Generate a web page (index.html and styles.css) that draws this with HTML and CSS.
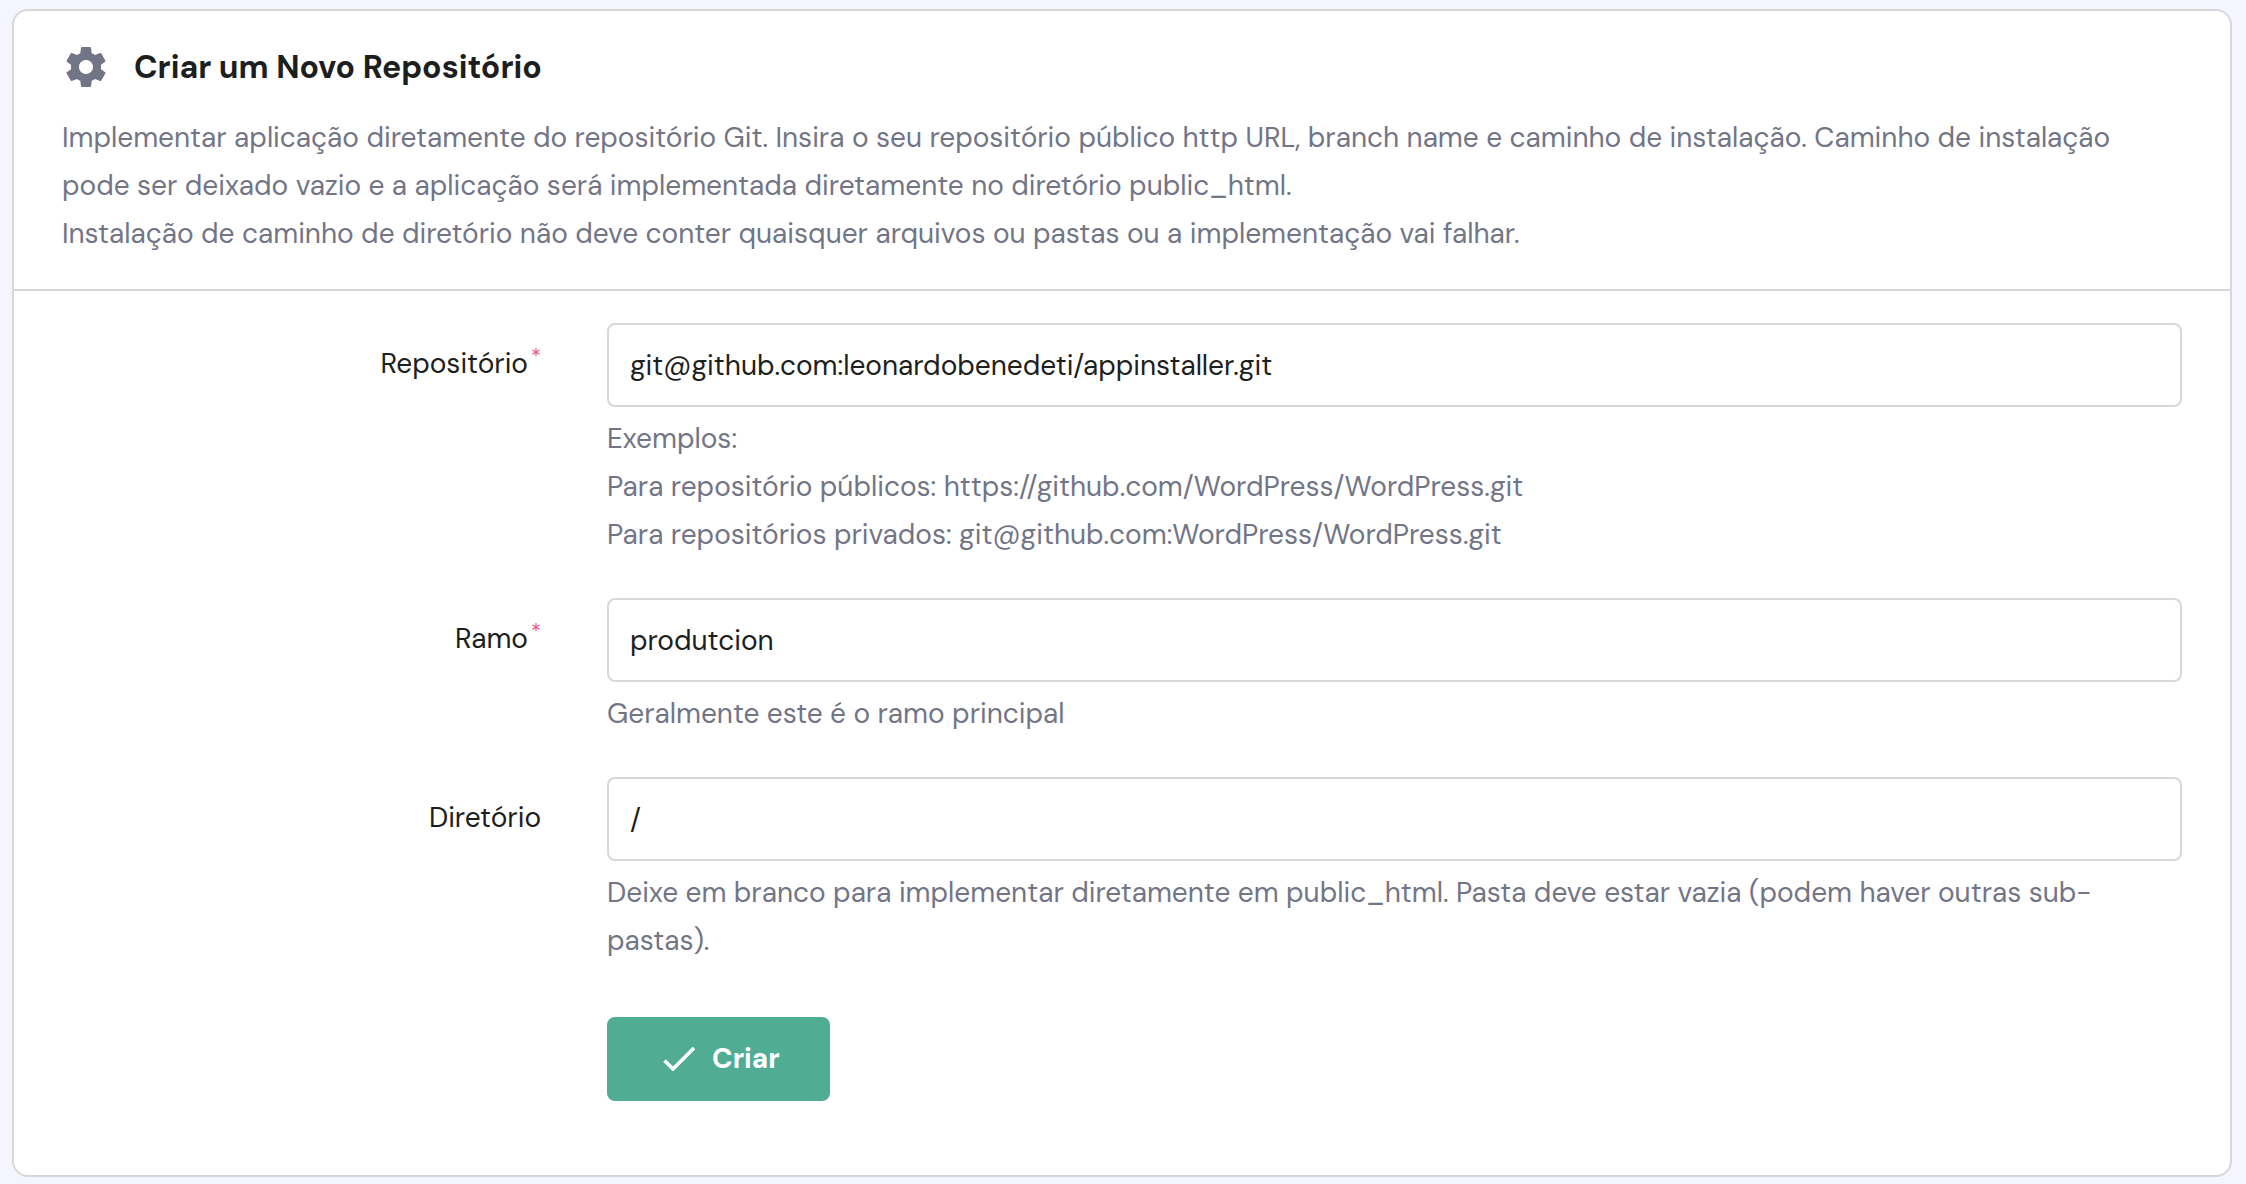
FILE: index.html
```
<!DOCTYPE html>
<html lang="pt">
<head>
  <meta charset="utf-8">
  <meta name="viewport" content="width=device-width, initial-scale=1">
  <title>Criar um Novo Repositório</title>
  <link rel="stylesheet" href="styles.css">
</head>
<body>
  <main class="card">
    <header class="card-header">
      <div class="card-heading">
        <svg class="card-icon" viewBox="0 0 24 24" aria-hidden="true">
          <path fill="currentColor" d="M19.43 12.98c.04-.32.07-.64.07-.98s-.03-.66-.07-.98l2.11-1.65c.19-.15.24-.42.12-.64l-2-3.46c-.12-.22-.39-.3-.61-.22l-2.49 1c-.52-.4-1.08-.73-1.69-.98l-.38-2.65C14.46 2.18 14.25 2 14 2h-4c-.25 0-.46.18-.49.42l-.38 2.65c-.61.25-1.17.59-1.69.98l-2.49-1c-.23-.09-.49 0-.61.22l-2 3.46c-.13.22-.07.49.12.64l2.11 1.65c-.04.32-.07.65-.07.98s.03.66.07.98l-2.11 1.65c-.19.15-.24.42-.12.64l2 3.46c.12.22.39.3.61.22l2.49-1c.52.4 1.08.73 1.69.98l.38 2.65c.03.24.24.42.49.42h4c.25 0 .46-.18.49-.42l.38-2.65c.61-.25 1.17-.59 1.69-.98l2.49 1c.23.09.49 0 .61-.22l2-3.46c.12-.22.07-.49-.12-.64l-2.11-1.65zM12 15.5c-1.93 0-3.5-1.57-3.5-3.5s1.57-3.5 3.5-3.5 3.5 1.57 3.5 3.5-1.57 3.5-3.5 3.5z"/>
        </svg>
        <h1 class="card-title">Criar um Novo Repositório</h1>
      </div>
      <p class="card-text">Implementar aplicação diretamente do repositório Git. Insira o seu repositório público http URL, branch name e caminho de instalação. Caminho de instalação pode ser deixado vazio e a aplicação será implementada diretamente no diretório public_html.<br>Instalação de caminho de diretório não deve conter quaisquer arquivos ou pastas ou a implementação vai falhar.</p>
    </header>
    <form class="form">
      <div class="field">
        <label class="label" for="repository">Repositório<span class="required">*</span></label>
        <div class="control">
          <input class="input" id="repository" type="text" value="git@github.com:leonardobenedeti/appinstaller.git" required>
          <p class="hint">Exemplos:<br>Para repositório públicos: https://github.com/WordPress/WordPress.git<br>Para repositórios privados: git@github.com:WordPress/WordPress.git</p>
        </div>
      </div>
      <div class="field">
        <label class="label" for="branch">Ramo<span class="required">*</span></label>
        <div class="control">
          <input class="input" id="branch" type="text" value="produtcion" required>
          <p class="hint">Geralmente este é o ramo principal</p>
        </div>
      </div>
      <div class="field">
        <label class="label" for="directory">Diretório</label>
        <div class="control">
          <input class="input" id="directory" type="text" value="/">
          <p class="hint">Deixe em branco para implementar diretamente em public_html. Pasta deve estar vazia (podem haver outras sub-pastas).</p>
        </div>
      </div>
      <div class="field actions">
        <button class="button" type="submit">
          <svg class="button-icon" viewBox="0 0 32 24" aria-hidden="true">
            <path d="M1.500 13.500L10 22L31 1" fill="none" stroke="currentColor" stroke-width="3.600"/>
          </svg>
          Criar
        </button>
      </div>
    </form>
  </main>
</body>
</html>
```
FILE: styles.css
```
:root {
  --text: #1d1e20;
  --muted: #727586;
  --line: #d8d8d8;
  --success: #50ad93;
  --required: #e8527f;
}

*,
*::before,
*::after {
  box-sizing: border-box;
}

body {
  margin: 0;
  padding: 9px 14px 8px 12px;
  background: #f4f5ff;
  color: var(--text);
  font-family: "DM Sans", Inter, sans-serif;
  font-size: 28px;
  line-height: 48px;
}

.card {
  background: #fff;
  border: 2px solid var(--line);
  border-radius: 16px;
}

.card-header {
  padding: 32px 48px 31px;
  border-bottom: 2px solid var(--line);
}

.card-heading {
  display: flex;
  align-items: center;
  gap: 24px;
  margin-bottom: 23px;
}

.card-icon {
  flex: none;
  width: 48px;
  height: 48px;
  color: var(--muted);
}

.card-title {
  margin: 0;
  font-size: 32px;
  font-weight: 700;
  line-height: 48px;
}

.card-text,
.hint {
  margin: 0;
  color: var(--muted);
}

.form {
  display: flex;
  flex-direction: column;
  gap: 39px;
  padding: 32px 48px 74px;
}

.field {
  display: grid;
  grid-template-columns: 479px minmax(0, 1fr);
  column-gap: 66px;
}

.label {
  padding-top: 17px;
  text-align: right;
}

.required {
  margin-left: 3px;
  color: var(--required);
  font-family: Inter, sans-serif;
  font-size: 20px;
  font-weight: 300;
  line-height: 1;
  vertical-align: 10px;
}

.control {
  display: flex;
  flex-direction: column;
  gap: 8px;
}

.input {
  width: 100%;
  height: 84px;
  padding: 0 21px;
  border: 2px solid var(--line);
  border-radius: 8px;
  background: #fff;
  color: inherit;
  font: inherit;
}

.actions {
  margin-top: 13px;
}

.button {
  grid-column: 2;
  justify-self: start;
  display: flex;
  align-items: center;
  gap: 17px;
  height: 84px;
  padding: 0 50px 0 56px;
  border: 0;
  border-radius: 8px;
  background: var(--success);
  color: #fff;
  font: inherit;
  font-weight: 700;
}

.button-icon {
  width: 32px;
  height: 24px;
}
```
